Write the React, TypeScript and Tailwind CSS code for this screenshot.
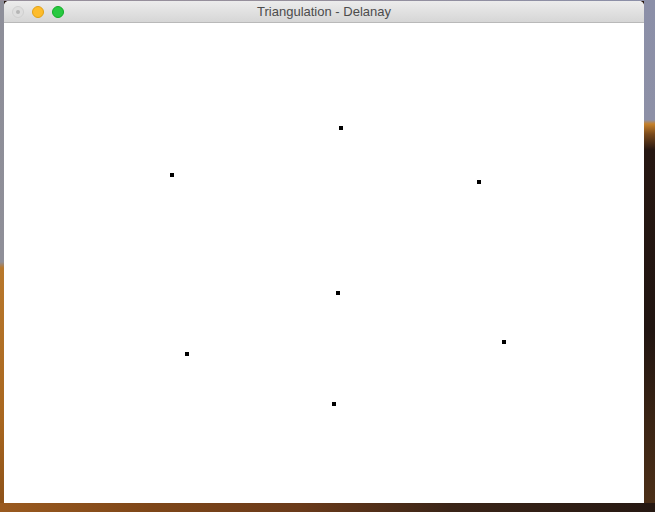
import React from "react";

// points of the triangulation canvas, relative to the content area
const points: [number, number][] = [
  [335, 103],
  [166, 150],
  [473, 157],
  [332, 268],
  [498, 317],
  [181, 329],
  [328, 379],
];

function TrafficLights() {
  return (
    <div className="flex items-center gap-[8px] pl-[8px]">
      <span className="flex h-[12px] w-[12px] items-center justify-center rounded-full border border-[#cfcfcf] bg-[#dedede]">
        <span className="h-[4px] w-[4px] rounded-full bg-[#b5b5b5]" />
      </span>
      <span className="h-[12px] w-[12px] rounded-full border border-[#e1a116] bg-[#fdbc2c]" />
      <span className="h-[12px] w-[12px] rounded-full border border-[#12ac28] bg-[#28c941]" />
    </div>
  );
}

export default function App() {
  return (
    <div className="flex h-[512px] w-[655px] flex-col overflow-hidden bg-[#2a1a12]">
      {/* desktop, top sliver */}
      <div className="h-[1px] bg-[linear-gradient(90deg,#978f9b,#958f9c_50%,#8b8fa8)]" />

      <div className="flex h-[502px]">
        {/* desktop, left strip */}
        <div className="w-[4px] bg-[linear-gradient(180deg,#8d8e99_0px,#8f8f98_261px,#b8782c_267px,#a8661f_420px,#8d5219_502px)]" />

        {/* window */}
        <div className="flex w-[640px] flex-col overflow-hidden rounded-t-[5px] bg-white">
          <div className="relative flex h-[22px] items-center border-b border-[#b9b9b9] bg-[linear-gradient(180deg,#ececec,#d6d6d6)]">
            <TrafficLights />
            <div className="absolute inset-0 flex items-center justify-center font-['Liberation_Sans',Arial,sans-serif] text-[13px] text-[#4c4c4c]">
              Triangulation - Delanay
            </div>
          </div>
          <div className="flex-1 bg-white">
            <svg width="640" height="479" className="block">
              {points.map(([x, y], i) => (
                <rect key={i} x={x} y={y} width="4" height="4" fill="#000" />
              ))}
            </svg>
          </div>
        </div>

        {/* desktop, right strip */}
        <div className="w-[11px] bg-[linear-gradient(180deg,#8b8fa8_0px,#8d90a6_119px,#c58029_123px,#7a4a1c_133px,#261712_149px,#211511_329px,#3a2414_419px,#4c2f18_502px)]" />
      </div>

      {/* desktop, bottom strip */}
      <div className="h-[9px] bg-[linear-gradient(90deg,#9a5a1f_0px,#7e4618_150px,#6a3a1a_300px,#3a2417_450px,#261812_655px)]" />
    </div>
  );
}
